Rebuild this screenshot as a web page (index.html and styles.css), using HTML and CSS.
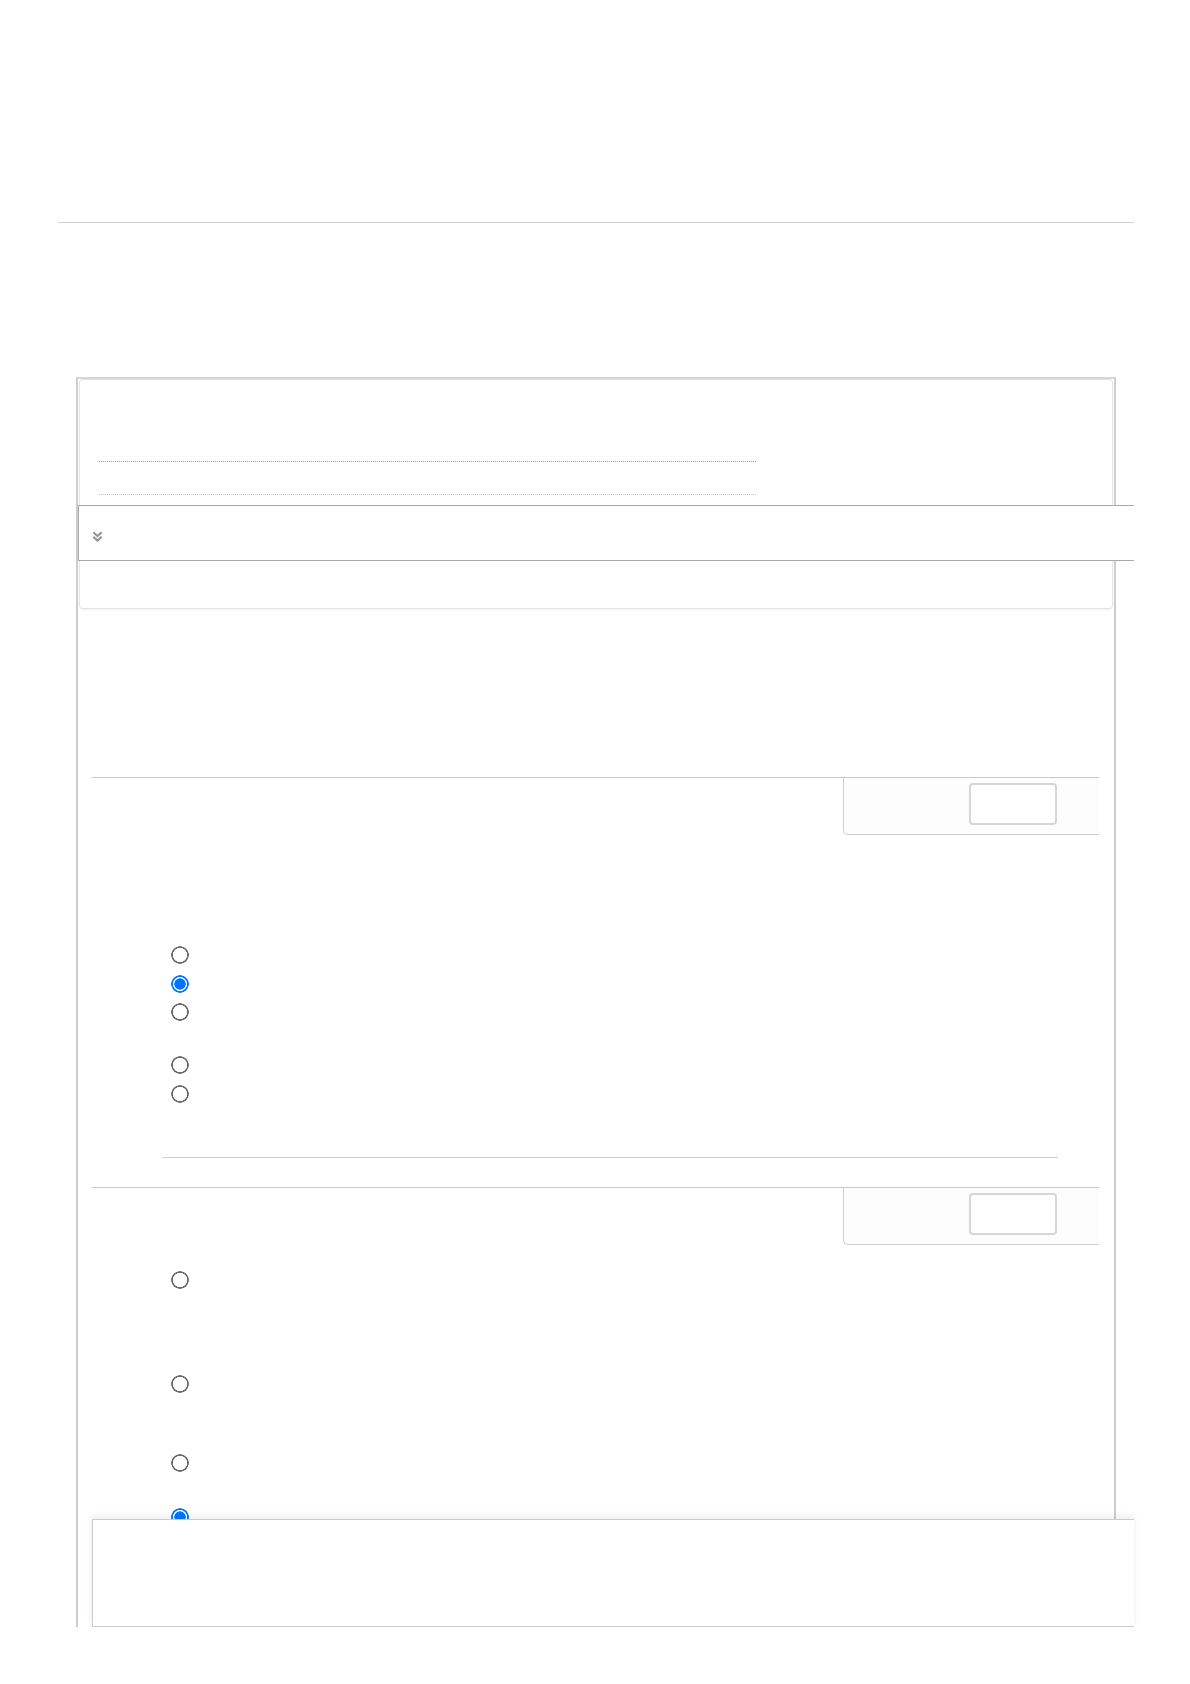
FILE: index.html
```html
<!DOCTYPE html>
<html lang="en">
<head>
<meta charset="utf-8">
<title>Quiz</title>
<link rel="stylesheet" href="styles.css">
</head>
<body>
<div class="page">
  <header class="topbar"></header>
  <main class="main">
    <section class="quiz">
      <div class="panel">
        <div class="blank blank-first"></div>
        <div class="blank blank-second"></div>
        <div class="bar">
          <svg class="chev" width="11" height="11" viewBox="0 0 11 11" aria-hidden="true">
            <path d="M1.3 1.2 L5.5 5 L9.7 1.2" fill="none" stroke="#959595" stroke-width="2.2"/>
            <path d="M1.3 5.8 L5.5 9.6 L9.7 5.8" fill="none" stroke="#959595" stroke-width="2.2"/>
          </svg>
        </div>
        <div class="panel-foot"></div>
      </div>

      <div class="question q1">
        <div class="q-head">
          <div class="info"><div class="score"></div></div>
        </div>
        <div class="q-body">
          <div class="q-text q1-text"></div>
          <label class="opt h29"><input type="radio" name="q1"></label>
          <label class="opt h28"><input type="radio" name="q1" checked></label>
          <label class="opt h53"><input type="radio" name="q1"></label>
          <label class="opt h29"><input type="radio" name="q1"></label>
          <label class="opt last"><input type="radio" name="q1"></label>
        </div>
        <div class="q-divider"></div>
      </div>

      <div class="question q2">
        <div class="q-head">
          <div class="info"><div class="score"></div></div>
        </div>
        <div class="q-body">
          <div class="q-text q2-text"></div>
          <label class="opt h104"><input type="radio" name="q2"></label>
          <label class="opt h79"><input type="radio" name="q2"></label>
          <label class="opt h54"><input type="radio" name="q2"></label>
          <label class="opt last"><input type="radio" name="q2" checked></label>
        </div>
      </div>
    </section>
  </main>
  <div class="footer-box"></div>
</div>
</body>
</html>
```
FILE: styles.css
```css
html, body {
  margin: 0;
  padding: 0;
  background: #ffffff;
  font-family: "Liberation Sans", Arial, sans-serif;
}

.page {
  position: relative;
  margin-left: 58px;
  width: 1076px;
}

.topbar {
  height: 222px;
  border-bottom: 1px solid #d2d2d2;
}

.main {
  padding-top: 154px;
}

.quiz {
  box-sizing: border-box;
  margin-left: 18px;
  width: 1040px;
  height: 1250px;
  border: 2px solid #cdcdcd;
  border-top-color: #d6d6d6;
  border-bottom: none;
}

.panel {
  margin: 0 1px;
  border: 1px solid #e4e4e4;
  border-radius: 4px;
  box-shadow: 0 1px 2px rgba(0, 0, 0, 0.05);
  background: #fff;
}

.blank {
  margin-left: 19px;
  width: 657px;
}

.blank-first {
  height: 81px;
  border-bottom: 1px dotted #9c9c9c;
}

.blank-second {
  height: 32px;
  border-bottom: 1px dotted #c4c4c4;
}

.bar {
  box-sizing: border-box;
  margin-top: 10px;
  margin-left: -2px;
  width: 1056px;
  height: 56px;
  border: 1px solid #ababab;
  border-right: none;
  background: #fff;
  padding: 25px 0 0 13px;
}

.chev {
  display: block;
}

.panel-foot {
  height: 47px;
}

.question {
  margin-left: 14px;
  width: 1007px;
  border-top: 1px solid #c8c8c8;
}

.q1 {
  margin-top: 168px;
}

.q2 {
  margin-top: 29px;
}

.q-head {
  display: flex;
  justify-content: flex-end;
}

.info {
  box-sizing: border-box;
  width: 256px;
  height: 57px;
  border-left: 1px solid #cfcfcf;
  border-bottom: 1px solid #cfcfcf;
  border-bottom-left-radius: 5px;
  background: #fdfdfd;
  padding: 5px 0 0 125px;
}

.score {
  box-sizing: border-box;
  width: 88px;
  height: 42px;
  border: 2px solid #d6d6d6;
  border-radius: 4px;
  background: #fff;
}

.q-body {
  padding-left: 79px;
}

.q1-text {
  height: 111px;
}

.q2-text {
  height: 26px;
}

.opt {
  display: block;
  height: 18px;
}

.opt input {
  -webkit-appearance: none;
  appearance: none;
  display: block;
  width: 18px;
  height: 18px;
  margin: 0;
  border-radius: 50%;
  background: radial-gradient(circle, #fff 6.9px, #6a6a6a 7.4px, #6a6a6a 8.6px, rgba(255,255,255,0) 9.1px);
}

.opt input:checked {
  background: radial-gradient(circle, #0075ff 5.4px, #fff 5.9px, #fff 6.8px, #0075ff 7.3px, #0075ff 8.6px, rgba(255,255,255,0) 9.1px);
}

.h28 { height: 28px; }
.h29 { height: 29px; }
.h53 { height: 53px; }
.h54 { height: 54px; }
.h79 { height: 79px; }
.h104 { height: 104px; }

.q-divider {
  margin: 54px 41px 0 70px;
  border-top: 1px solid #cfcfcf;
}

.footer-box {
  position: absolute;
  left: 34px;
  top: 1519px;
  z-index: 2;
  box-sizing: border-box;
  width: 1042px;
  height: 109px;
  border: 1px solid #cccccc;
  border-right: none;
  border-bottom-width: 2px;
  background: #fff;
  box-shadow: 0 -3px 7px rgba(0, 0, 0, 0.07);
}
```
